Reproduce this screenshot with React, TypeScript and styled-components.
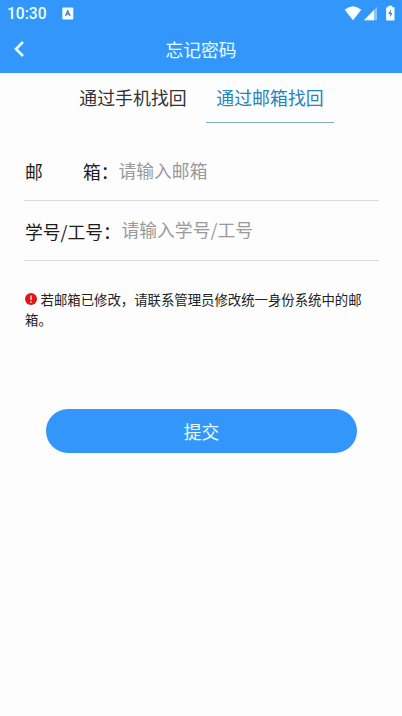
import React from "react";
import styled, { createGlobalStyle } from "styled-components";

const GlobalStyle = createGlobalStyle`
  * { box-sizing: border-box; }
  body { margin: 0; background: #fdfdfe; }
`;

const Page = styled.div`
  width: 402px;
  height: 716px;
  overflow: hidden;
  background: #fdfdfe;
  color: #222;
  font-family: Roboto, "Noto Sans CJK SC", sans-serif;
  font-size: 17.8px;
`;

const Header = styled.header`
  height: 73px;
  background: #3396fb;
  color: #e9ffff;
`;

const StatusBar = styled.div`
  height: 27px;
  display: flex;
  align-items: center;
  justify-content: space-between;
  padding: 0 6px 0 7px;
`;

const StatusGroup = styled.div`
  display: flex;
  align-items: center;
`;

const Clock = styled.span`
  width: 54.5px;
  font-size: 15.6px;
  font-weight: 500;
  line-height: 27px;
  padding-top: 1px;
`;

const NavBar = styled.div`
  height: 44px;
  display: grid;
  grid-template-columns: 40px 1fr 40px;
  align-items: center;
`;

const BackButton = styled.button`
  height: 44px;
  padding: 0 0 0 12px;
  border: 0;
  background: none;
  color: inherit;
  display: flex;
  align-items: center;
`;

const Title = styled.h1`
  margin: 0;
  font: inherit;
  font-family: "Noto Sans CJK SC", sans-serif;
  line-height: 44px;
  text-align: center;
`;

const Tabs = styled.nav`
  height: 50px;
  display: flex;
  justify-content: center;
  gap: 9px;
  padding-left: 1px;
`;

const Tab = styled.button<{ $active?: boolean }>`
  width: 128px;
  height: 50px;
  padding: 0 0 2px;
  border: 0;
  border-bottom: 1.5px solid ${(p) => (p.$active ? "#7fadc3" : "transparent")};
  background: none;
  color: ${(p) => (p.$active ? "#2484bd" : "#333")};
  font-family: "Noto Sans CJK SC", sans-serif;
  font-size: 17.9px;
`;

const Form = styled.form`
  padding: 19px 23px 0 24px;
  font-family: "Noto Sans CJK SC", sans-serif;
`;

const Field = styled.label<{ $height: number }>`
  height: ${(p) => p.$height}px;
  display: flex;
  align-items: center;
  border-bottom: 1px solid #d9dadc;
`;

const FieldName = styled.span<{ $width: number }>`
  width: ${(p) => p.$width}px;
  display: flex;
  flex: none;
  justify-content: space-between;
  padding-left: 1px;
  color: #1c1c1c;
  white-space: nowrap;
`;

const Input = styled.input`
  flex: 1;
  min-width: 0;
  padding: 0 0 3px;
  border: 0;
  outline: 0;
  background: none;
  color: #222;
  font: inherit;
  &::placeholder { color: #999; opacity: 1; }
`;

const Notice = styled.p`
  margin: 28px 0 0;
  padding-left: 1px;
  color: #222;
  font-size: 13.38px;
  line-height: 20px;
`;

const WarningIcon = styled.svg`
  width: 12px;
  height: 12px;
  margin-right: 3.5px;
  vertical-align: 0;
`;

const Submit = styled.button`
  display: block;
  width: 311px;
  height: 44px;
  margin: 80px 0 0 22px;
  padding: 0;
  border: 0;
  border-radius: 22px;
  background: #3396fb;
  color: #e9ffff;
  font: inherit;
`;

const KeyboardIcon = () => (
  <svg width="12" height="13" viewBox="0 0 12 13">
    <rect x=".3" y=".5" width="11" height="12" rx="1" fill="#effdff" />
    <path d="M3.5 9 5.8 3.7 8.1 9M4.3 7.2h3" fill="none" stroke="#577795" strokeWidth="1.2" />
  </svg>
);

const StatusIcons = () => (
  <svg width="54" height="18" viewBox="0 0 54 18">
    <path d="M2.7 4.8Q11-2.400 19.300 4.800L11 15.2Z" fill="#f5ffff" />
    <path d="M22 15.2 35 2v13.2Z" fill="#8bc3fb" />
    <path d="M22 15.2 32 5v10.200Z" fill="#f5ffff" />
    <path d="M46.300.700h4v1.500h1.500q.7 0 .7.700v11.900q0 .7-.7.700h-7q-.7 0-.7-.7V2.900q0-.7.700-.7h1.500Z" fill="#f5ffff" />
    <path d="M48.800 4.500 46.300 9h1.800v3.200L50.500 7.900h-1.700Z" fill="#4a83bd" />
  </svg>
);

export default function App() {
  return (
    <Page>
      <GlobalStyle />
      <Header>
        <StatusBar>
          <StatusGroup>
            <Clock>10:30</Clock>
            <KeyboardIcon />
          </StatusGroup>
          <StatusIcons />
        </StatusBar>
        <NavBar>
          <BackButton type="button" aria-label="返回">
            <svg width="13" height="18" viewBox="0 0 13 18">
              <path d="M11 2 4 9l7 7" fill="none" stroke="currentColor" strokeWidth="2.600" />
            </svg>
          </BackButton>
          <Title>忘记密码</Title>
        </NavBar>
      </Header>
      <Tabs>
        <Tab type="button">通过手机找回</Tab>
        <Tab type="button" $active>通过邮箱找回</Tab>
      </Tabs>
      <Form>
        <Field $height={59}>
          <FieldName $width={94.5}>
            <span>邮</span>
            <span>箱：</span>
          </FieldName>
          <Input placeholder="请输入邮箱" />
        </Field>
        <Field $height={60}>
          <FieldName $width={97.5}>学号/工号：</FieldName>
          <Input placeholder="请输入学号/工号" />
        </Field>
        <Notice>
          <WarningIcon viewBox="0 0 12 12">
            <circle cx="6" cy="6" r="6" fill="#df1717" />
            <path d="M6 2.500v4.600M6 8.200v1.500" stroke="#ffdada" strokeWidth="1.500" />
          </WarningIcon>
          若邮箱已修改，请联系管理员修改统一身份系统中的邮箱。
        </Notice>
        <Submit type="button">提交</Submit>
      </Form>
    </Page>
  );
}
